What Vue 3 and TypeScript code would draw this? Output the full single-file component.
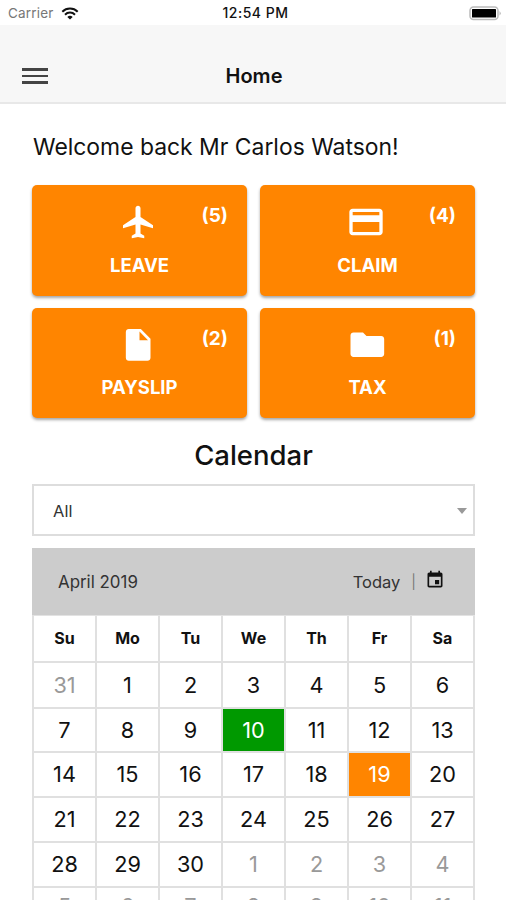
<script setup lang="ts">
interface Tile {
  label: string
  count: number
  box: string
  icon: string
}

interface Day {
  n: number
  muted: boolean
  mark: '' | 'today' | 'event'
}

const tiles: Tile[] = [
  {
    label: 'LEAVE',
    count: 5,
    box: '0 0 512 512',
    icon: 'M448 336v-40L288 192V79.200c0-17.700-14.800-31.200-32-31.200s-32 13.500-32 31.200V192L64 296v40l160-48v113.600l-48 31.200V464l80-16 80 16v-31.200l-48-31.200V288l160 48z',
  },
  {
    label: 'CLAIM',
    count: 4,
    box: '0 0 24 24',
    icon: 'M20 4H4c-1.110 0-1.990.89-1.990 2L2 18c0 1.110.89 2 2 2h16c1.110 0 2-.89 2-2V6c0-1.110-.89-2-2-2zm0 14H4v-6h16v6zm0-10H4V6h16v2z',
  },
  {
    label: 'PAYSLIP',
    count: 2,
    box: '0 0 24 24',
    icon: 'M6.500 2.400c-1 0-1.800.8-1.800 1.800v15.400c0 1 .8 1.800 1.800 1.800h11.200c1 0 1.800-.8 1.800-1.800V8.300l-5.800-5.900zM12.900 3.900l5.100 5.200h-5.100z',
  },
  {
    label: 'TAX',
    count: 1,
    box: '0 0 24 24',
    icon: 'M10.200 4.500H4.500c-1 0-1.800.8-1.800 1.800v11.100c0 1 .8 1.800 1.800 1.800h16.600c1 0 1.800-.8 1.800-1.800V8.400c0-1-.8-1.800-1.800-1.800h-8.800z',
  },
]

const weekdays = ['Su', 'Mo', 'Tu', 'We', 'Th', 'Fr', 'Sa']

// April 2019 starts on a Monday; six weeks are shown.
const days: Day[] = Array.from({ length: 42 }, (_, i) => {
  const inMonth = i >= 1 && i <= 30
  const n = i === 0 ? 31 : inMonth ? i : i - 30
  const mark = i === 10 ? 'today' : i === 19 ? 'event' : ''
  return { n, muted: !inMonth, mark }
})
</script>

<template>
  <div class="screen">
    <div class="status">
      <div class="carrier">
        <span>Carrier</span>
        <svg class="wifi" viewBox="0 0 18 13">
          <path d="M1.300 4.700a11 11 0 0 1 15.400 0M4 7.700a7 7 0 0 1 10 0" fill="none" stroke="#111" stroke-width="2" />
          <path d="M9 12.500 6.300 10a3.800 3.800 0 0 1 5.400 0z" fill="#111" />
        </svg>
      </div>
      <div class="time">12:54 PM</div>
      <div class="power">
        <svg class="battery" viewBox="0 0 32 15">
          <rect x="1" y="1" width="28" height="12.500" rx="3.500" fill="#fff" stroke="#bbb" stroke-width="1.500" />
          <rect x="3" y="3" width="24" height="8.500" rx="0.500" fill="#000" />
          <path d="M30.500 5q2.500 2.300 0 4.600z" fill="#bbb" />
        </svg>
      </div>
    </div>

    <header class="toolbar">
      <button class="menu" aria-label="Menu"><i></i><i></i><i></i></button>
      <h1>Home</h1>
    </header>

    <main class="content">
      <p class="welcome"><span>Welcome back Mr Carlos Watson!</span></p>

      <div class="tiles">
        <button v-for="t in tiles" :key="t.label" class="tile">
          <svg class="tile-icon" :viewBox="t.box"><path :d="t.icon" fill="#fff" fill-rule="evenodd" /></svg>
          <span class="tile-label">{{ t.label }}</span>
          <span class="tile-count">({{ t.count }})</span>
        </button>
      </div>

      <h2>Calendar</h2>

      <div class="select">
        <span>All</span>
        <i class="caret"></i>
      </div>

      <section class="calendar">
        <div class="cal-head">
          <span class="month">April 2019</span>
          <span class="today-link">Today</span>
          <span class="sep">|</span>
          <svg class="cal-icon" viewBox="0 0 24 24">
            <path d="M17 12h-5v5h5v-5zM16 1v2H8V1H6v2H5c-1.110 0-1.990.9-1.990 2L3 19c0 1.100.89 2 2 2h14c1.100 0 2-.9 2-2V5c0-1.100-.9-2-2-2h-1V1h-2zm3 18H5V8h14v11z" fill="#111" />
          </svg>
        </div>
        <div class="grid">
          <div v-for="w in weekdays" :key="w" class="cell weekday">{{ w }}</div>
          <div v-for="(d, i) in days" :key="i" class="cell" :class="[d.mark, { muted: d.muted, first: i < 7 }]">{{ d.n }}</div>
        </div>
      </section>
    </main>
  </div>
</template>

<style>
body {
  margin: 0;
  overflow: hidden;
}
</style>

<style scoped>
.screen {
  width: 506px;
  height: 900px;
  overflow: hidden;
  background: #fff;
  color: #111;
  font-family: Inter, 'Liberation Sans', sans-serif;
  box-sizing: border-box;
}
.screen * {
  box-sizing: border-box;
}
button {
  border: 0;
  padding: 0;
  font: inherit;
}
.status {
  display: grid;
  grid-template-columns: 1fr auto 1fr;
  align-items: center;
  height: 25px;
  padding: 1px 5px 0 8px;
  font-size: 13.500px;
  line-height: 24px;
}
.carrier {
  display: flex;
  align-items: center;
  gap: 7px;
  color: #777;
  letter-spacing: 0.200px;
}
.wifi {
  width: 18px;
  height: 13px;
}
.time {
  font-size: 14px;
  font-weight: 500;
  letter-spacing: 0.500px;
  padding-left: 2px;
}
.power {
  display: flex;
  justify-content: flex-end;
}
.battery {
  width: 32px;
  height: 15px;
}
.toolbar {
  display: grid;
  grid-template-columns: 48px 1fr 46px;
  align-items: center;
  height: 79px;
  padding: 25px 0 0;
  background: #f7f7f7;
  border-bottom: 2px solid #e8e8e8;
}
.menu {
  display: flex;
  flex-direction: column;
  gap: 4px;
  width: 26px;
  margin-left: 22px;
  background: none;
}
.menu i {
  height: 2.500px;
  background: #444;
}
h1 {
  margin: 0;
  text-align: center;
  font-size: 20px;
  font-weight: 600;
  line-height: 28px;
}
.content {
  padding: 0 31px 0 32px;
}
.welcome {
  margin: 0;
  padding: 27px 0 22px 1px;
  font-size: 22.900px;
  line-height: 32px;
  white-space: nowrap;
}
.tiles {
  display: grid;
  grid-template-columns: 1fr 1fr;
  gap: 12px 13px;
}
.tile {
  position: relative;
  display: flex;
  flex-direction: column;
  align-items: center;
  height: 110.500px;
  padding-top: 17px;
  border-radius: 5px;
  background: #ff8500;
  color: #fff;
  font-weight: 700;
  box-shadow: 0 2px 3px rgba(0, 0, 0, 0.35);
}
.tile-icon {
  width: 40px;
  height: 40px;
  margin-right: 4px;
}
.tile-label {
  margin-top: 9.500px;
  font-size: 18.500px;
  line-height: 26px;
}
.tile-count {
  position: absolute;
  top: 18px;
  right: 19px;
  font-size: 19px;
  line-height: 26px;
}
h2 {
  margin: 0;
  padding: 19px 0 11px;
  text-align: center;
  font-size: 27.500px;
  font-weight: 500;
  line-height: 36px;
}
.select {
  display: flex;
  align-items: center;
  justify-content: space-between;
  height: 52px;
  padding: 1px 6px 0 19px;
  border: 2px solid #ddd;
  color: #333;
  font-size: 16.500px;
}
.caret {
  border: 5.500px solid transparent;
  border-top: 6px solid #999;
  border-bottom: 0;
}
.calendar {
  margin-top: 12px;
}
.cal-head {
  display: flex;
  align-items: center;
  height: 67px;
  padding: 0 30px 0 26px;
  background: #ccc;
  color: #333;
  font-size: 16.900px;
}
.month {
  flex: 1;
}
.today-link {
  font-size: 16.500px;
}
.sep {
  margin: 0 9px 0 11px;
  color: #777;
  font-size: 14px;
}
.cal-icon {
  width: 20px;
  height: 20px;
  margin-top: -3px;
}
.grid {
  display: grid;
  grid-template-columns: repeat(7, 1fr);
  grid-template-rows: 47px 46px 44px 45px 45px 45px 39px;
  border-top: 1px solid #e2e2e2;
  border-left: 2px solid #e0e0e0;
}
.cell {
  display: flex;
  align-items: center;
  justify-content: center;
  padding-bottom: 1px;
  border-right: 2px solid #e0e0e0;
  border-bottom: 2px solid #e0e0e0;
  font-size: 21.700px;
}
.first {
  padding-bottom: 0;
}
.weekday {
  font-size: 16px;
  font-weight: 700;
}
.muted {
  color: #999;
}
.today {
  background: #090;
  color: #fff;
}
.event {
  background: #ff8500;
  color: #fff;
}
</style>
